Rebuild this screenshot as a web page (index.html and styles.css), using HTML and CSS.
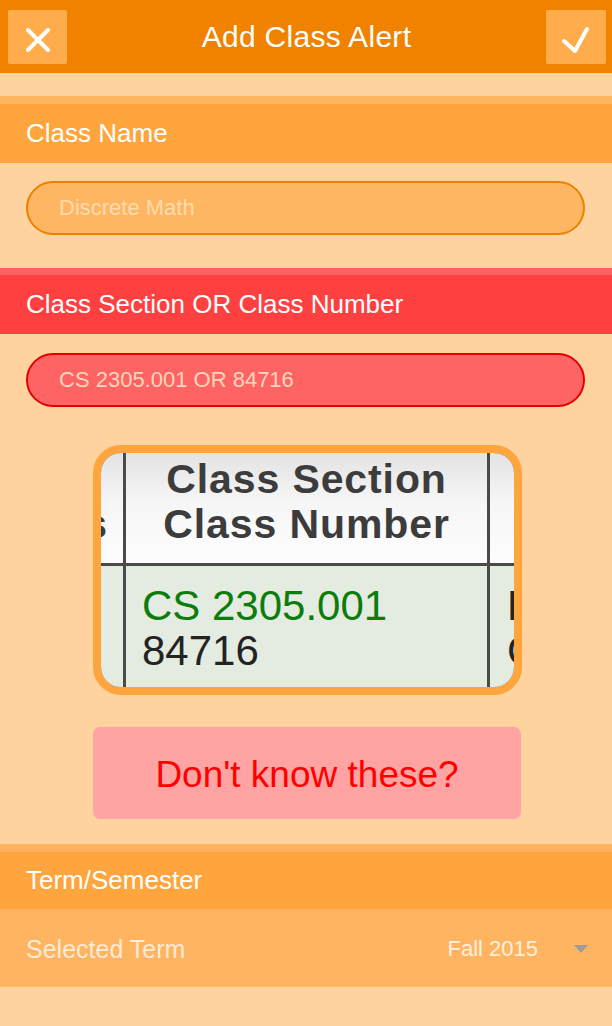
FILE: index.html
```html
<!DOCTYPE html>
<html lang="en">
<head>
<meta charset="utf-8">
<title>Add Class Alert</title>
<link rel="stylesheet" href="styles.css">
</head>
<body>
<header class="topbar">
  <button class="icon-btn" aria-label="Cancel">
    <svg class="icon" width="24" height="24" viewBox="0 0 24 24"><path d="M2 2 L22 22 M22 2 L2 22" fill="none" stroke="#fff" stroke-width="4" stroke-linecap="round"/></svg>
  </button>
  <h1 class="title">Add Class Alert</h1>
  <button class="icon-btn" aria-label="Save">
    <svg class="icon" width="28" height="28" viewBox="0 0 28 28"><path d="M2 15 L13 25 L25 3" fill="none" stroke="#fff" stroke-width="4" stroke-linecap="round" stroke-linejoin="round"/></svg>
  </button>
</header>

<main class="content">
  <section class="group group-orange">
    <div class="group-title">Class Name</div>
    <div class="field-wrap">
      <div class="field field-orange">Discrete Math</div>
    </div>
  </section>

  <section class="group group-red">
    <div class="group-title">Class Section OR Class Number</div>
    <div class="field-wrap field-wrap-tight">
      <div class="field field-red">CS 2305.001 OR 84716</div>
    </div>
    <div class="help">
      <div class="snap">
        <div class="snap-grid">
          <div class="cell head head-side"><span class="clip-line">&nbsp;</span><span class="clip-line">Units</span></div>
          <div class="cell head head-main">Class Section<br>Class Number</div>
          <div class="cell head"></div>
          <div class="cell body"></div>
          <div class="cell body body-main"><span class="green">CS 2305.001</span><br>84716</div>
          <div class="cell body body-side">D<br>C</div>
        </div>
      </div>
      <div class="help-btn">Don't know these?</div>
    </div>
  </section>

  <section class="group group-orange">
    <div class="group-title group-title-short">Term/Semester</div>
    <div class="term-row">
      <span class="term-label">Selected Term</span>
      <span class="term-value">Fall 2015<span class="caret"></span></span>
    </div>
  </section>
</main>
</body>
</html>
```

FILE: styles.css
```css
* { box-sizing: border-box; }

html, body {
  margin: 0;
  padding: 0;
}

body {
  width: 612px;
  min-height: 1026px;
  background: #FFD3A0;
  font-family: "Liberation Sans", Arial, Helvetica, sans-serif;
  color: #fff;
}

.topbar {
  height: 73px;
  background: #F08200;
  display: flex;
  align-items: center;
  justify-content: space-between;
  padding: 0 6px 0 8px;
}

.icon-btn {
  width: 59px;
  height: 54px;
  border: 0;
  border-radius: 2px;
  background: #FFAC4C;
  padding: 6px 0 0 0;
  display: flex;
  align-items: center;
  justify-content: center;
}

.icon-btn + .title + .icon-btn { width: 60px; }

.icon { display: block; }

.title {
  margin: 0;
  font-size: 30px;
  font-weight: normal;
  letter-spacing: 0.3px;
  color: #fff;
}

.content {
  padding-top: 23px;
}

.group-orange { border-top: 8px solid #FFB35F; }
.group-red { border-top: 7px solid #FF6262; }

.group-title {
  height: 59px;
  display: flex;
  align-items: center;
  padding-left: 26px;
  font-size: 26px;
  color: #fff;
}

.group-orange .group-title { background: #FFA53E; }
.group-red .group-title { background: #FF4040; }
.group-title-short { height: 57px; }

.field-wrap {
  padding: 18px 27px 33px 26px;
}

.field-wrap-tight {
  padding: 19px 27px 0 26px;
}

.field {
  height: 54px;
  border-radius: 27px;
  border: 2px solid;
  display: flex;
  align-items: center;
  padding-left: 31px;
  font-size: 22px;
}

.field-orange {
  background: #FFB662;
  border-color: #EC8100;
  color: #FFDBAE;
}

.field-red {
  background: #FF6464;
  border-color: #E40000;
  color: #FFD6BC;
}

.help {
  padding: 38px 0 25px 93px;
  display: flex;
  flex-direction: column;
}

.snap {
  width: 429px;
  height: 250px;
  border: 8px solid #FFA53E;
  border-radius: 28px;
  overflow: hidden;
  background: #FFD3A0;
}

.snap-grid {
  display: grid;
  grid-template-columns: 22px 361px 1fr;
  grid-template-rows: 110px 1fr;
  gap: 3px;
  height: 100%;
  background: #4a4a4a;
}

.cell {
  overflow: hidden;
  white-space: nowrap;
}

.head {
  background: linear-gradient(#e3e3e3 0%, #f6f6f6 45%, #fdfdfd 100%);
  font-weight: bold;
  font-size: 41px;
  line-height: 45px;
  letter-spacing: 0.9px;
  color: #3c3c3c;
  padding-top: 4px;
}

.head-main { text-align: center; }

.head-side {
  display: flex;
  flex-direction: column;
  align-items: flex-end;
  padding-right: 15px;
}

.clip-line { display: block; }

.body {
  background: #E4EBE0;
  font-size: 42px;
  line-height: 45px;
  color: #232323;
  padding-top: 17px;
}

.body-main { padding-left: 16px; }
.body-side { padding-left: 17px; }

.green { color: #0C7C0C; }

.help-btn {
  margin-top: 32px;
  width: 428px;
  height: 92px;
  border-radius: 7px;
  background: #FFA3A3;
  color: #FF0000;
  font-size: 37px;
  display: flex;
  align-items: center;
  justify-content: center;
  padding-top: 3px;
}

.term-row {
  height: 78px;
  background: #FFB462;
  display: flex;
  align-items: center;
  justify-content: space-between;
  padding: 2px 24px 0 26px;
}

.term-label {
  font-size: 25px;
  color: #FFEBD4;
}

.term-value {
  display: flex;
  align-items: center;
  font-size: 22px;
  color: #FFF0DE;
}

.caret {
  width: 0;
  height: 0;
  margin-left: 36px;
  border-left: 7.5px solid transparent;
  border-right: 7.5px solid transparent;
  border-top: 8px solid #9c9c9c;
}
```
